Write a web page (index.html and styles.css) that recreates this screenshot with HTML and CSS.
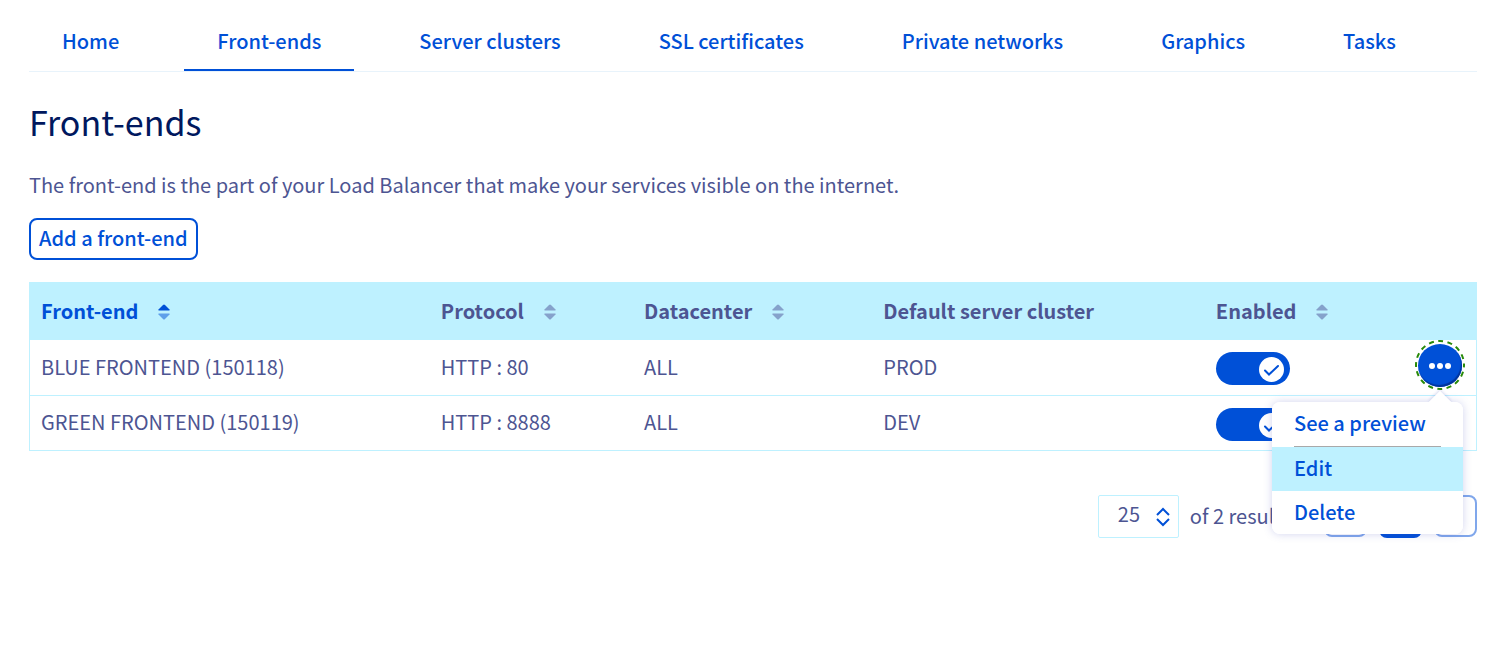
FILE: index.html
```html
<!DOCTYPE html>
<html lang="en">
<head>
<meta charset="utf-8">
<meta name="viewport" content="width=device-width, initial-scale=1">
<title>Front-ends</title>
<link rel="stylesheet" href="styles.css">
</head>
<body>
<svg class="sprite" aria-hidden="true">
  <symbol id="sort-up" viewBox="0 0 12 8"><path d="M.5 6.5V5.5L5 1Q6 0 7 1L11.5 5.5V6.5Z"/></symbol>
  <symbol id="sort-down" viewBox="0 0 12 8"><path d="M.5 1.5V2.5L5 7Q6 8 7 7L11.5 2.5V1.5Z"/></symbol>
  <symbol id="dots" viewBox="0 0 24 8"><circle cx="4" cy="4" r="3"/><circle cx="12" cy="4" r="3"/><circle cx="20" cy="4" r="3"/></symbol>
</svg>
<nav class="tabs">
  <a class="tab" href="#home">Home</a>
  <a class="tab tab-active" href="#frontends" aria-current="page">Front-ends</a>
  <a class="tab" href="#clusters">Server clusters</a>
  <a class="tab" href="#ssl">SSL certificates</a>
  <a class="tab" href="#networks">Private networks</a>
  <a class="tab" href="#graphics">Graphics</a>
  <a class="tab" href="#tasks">Tasks</a>
</nav>
<main>
  <h1 class="title">Front-ends</h1>
  <p class="intro">The front-end is the part of your Load Balancer that make your services visible on the internet.</p>
  <button class="add-button" type="button">Add a front-end</button>
  <table class="grid">
    <colgroup>
      <col class="col-name"><col class="col-protocol"><col class="col-datacenter"><col class="col-cluster"><col class="col-enabled"><col>
    </colgroup>
    <thead>
      <tr>
        <th scope="col"><button class="sort sort-active" type="button">Front-end <span class="arrows"><svg><use href="#sort-up"/></svg><svg><use href="#sort-down"/></svg></span></button></th>
        <th scope="col"><button class="sort" type="button">Protocol <span class="arrows"><svg><use href="#sort-up"/></svg><svg><use href="#sort-down"/></svg></span></button></th>
        <th scope="col"><button class="sort" type="button">Datacenter <span class="arrows"><svg><use href="#sort-up"/></svg><svg><use href="#sort-down"/></svg></span></button></th>
        <th scope="col">Default server cluster</th>
        <th scope="col"><button class="sort" type="button">Enabled <span class="arrows"><svg><use href="#sort-up"/></svg><svg><use href="#sort-down"/></svg></span></button></th>
        <td></td>
      </tr>
    </thead>
    <tbody>
      <tr>
        <td>BLUE FRONTEND (150118)</td>
        <td>HTTP : 80</td>
        <td>ALL</td>
        <td>PROD</td>
        <td>
          <label class="switch"><input type="checkbox" role="switch" aria-label="Enable BLUE FRONTEND" checked><span class="knob"><svg viewBox="0 0 25 25"><path d="M6 13.5 10 17.5 19 9"/></svg></span></label>
        </td>
        <td>
          <div class="actions">
            <button class="more" type="button" aria-label="Actions for BLUE FRONTEND" aria-expanded="true"><svg class="dots"><use href="#dots"/></svg><svg class="ring" viewBox="0 0 50 50"><circle cx="25" cy="25" r="24"/></svg></button>
            <div class="menu">
              <button class="menu-item menu-first" type="button">See a preview</button>
              <button class="menu-item menu-hover" type="button">Edit</button>
              <button class="menu-item menu-last" type="button">Delete</button>
            </div>
          </div>
        </td>
      </tr>
      <tr>
        <td>GREEN FRONTEND (150119)</td>
        <td>HTTP : 8888</td>
        <td>ALL</td>
        <td>DEV</td>
        <td>
          <label class="switch"><input type="checkbox" role="switch" aria-label="Enable GREEN FRONTEND" checked><span class="knob"><svg viewBox="0 0 25 25"><path d="M6 13.5 10 17.5 19 9"/></svg></span></label>
        </td>
        <td>
          <div class="actions">
            <button class="more" type="button" aria-label="Actions for GREEN FRONTEND"><svg class="dots"><use href="#dots"/></svg></button>
          </div>
        </td>
      </tr>
    </tbody>
  </table>
  <div class="pager">
    <label class="page-size">
      <select aria-label="Results per page"><option>25</option><option>50</option></select>
      <svg viewBox="0 0 16 20"><path d="M2 8 8 2 14 8M2 12 8 18 14 12"/></svg>
    </label>
    <span class="count">of 2 results</span>
    <div class="pages">
      <button class="page" type="button" aria-label="Previous page" disabled></button>
      <button class="page page-current" type="button" aria-label="Page 1"></button>
      <button class="page" type="button" aria-label="Next page" disabled></button>
    </div>
  </div>
</main>
</body>
</html>
```
FILE: styles.css
```css
* { box-sizing: border-box; }

body {
  margin: 0;
  padding: 12px 28px 40px 29px;
  background: #fff;
  color: #4d5592;
  font: 20px/28px "Noto Sans CJK SC", "Noto Sans", sans-serif;
}

button, select { font: inherit; color: inherit; cursor: pointer; }
.sprite { position: absolute; width: 0; height: 0; }

.tabs {
  display: flex;
  gap: 32px;
  border-bottom: 1px solid #e8f3fb;
}
.tab {
  padding: 15px 33px 14px;
  border-bottom: 2px solid transparent;
  color: #0050d7;
  font-weight: 500;
  text-decoration: none;
  white-space: nowrap;
}
.tab-active { border-color: #0050d7; }

.title {
  margin: 30px 0 0;
  color: #00185e;
  font-size: 34px;
  line-height: 40px;
  font-weight: 400;
}
.intro { margin: 29px 0 19px; }

.add-button {
  display: block;
  height: 42px;
  padding: 0 8px 2px;
  border: 2px solid #0050d7;
  border-radius: 8px;
  background: #fff;
  color: #0050d7;
  font-weight: 500;
}

.grid {
  width: 100%;
  margin-top: 22px;
  table-layout: fixed;
  border-spacing: 0;
  border: 1px solid #bef1ff;
}
.col-name { width: 27.65%; }
.col-protocol { width: 14.05%; }
.col-datacenter { width: 16.55%; }
.col-cluster { width: 23%; }
.col-enabled { width: 13%; }
.grid th, .grid td {
  height: 55px;
  padding: 0 11px 2px;
  text-align: left;
  white-space: nowrap;
}
.grid th, .grid thead td { height: 57px; background: #bef1ff; font-weight: 700; }
.grid tbody tr + tr td { border-top: 1px solid #bef1ff; }

.sort {
  display: flex;
  align-items: center;
  gap: 20px;
  padding: 0;
  border: 0;
  background: none;
}
.arrows { display: grid; padding-top: 2px; color: #85a2cb; }
.arrows svg { width: 12px; height: 8px; fill: currentColor; }
.sort-active, .sort-active .arrows { color: #0050d7; }
.sort-active svg:last-child { opacity: .5; }

.switch { position: relative; display: block; width: 74px; height: 33px; margin-top: 4px; }
.switch input {
  appearance: none;
  display: block;
  width: 100%;
  height: 100%;
  margin: 0;
  border-radius: 17px;
  background: #0050d7;
}
.knob {
  position: absolute;
  top: 5px;
  right: 6px;
  width: 25px;
  height: 25px;
  border-radius: 50%;
  background: #fff;
}
.knob svg { display: block; fill: none; stroke: #0050d7; stroke-width: 2; stroke-linecap: round; }

.actions { position: relative; display: flex; justify-content: flex-end; padding: 0 3px 2px 0; }
.more {
  position: relative;
  display: grid;
  place-items: center;
  width: 44px;
  height: 43px;
  padding: 0;
  border: 0;
  border-radius: 50%;
  background: #0050d7;
  box-shadow: inset -1px -2px 1px #00349b;
}
.dots { width: 24px; height: 8px; fill: #fff; }
.ring {
  position: absolute;
  inset: -4px -3px -3px;
  width: 50px;
  height: 50px;
  fill: none;
  stroke: #298a09;
  stroke-width: 2;
  stroke-dasharray: 5 4.42;
  stroke-dashoffset: 2.5;
}

.menu {
  position: absolute;
  z-index: 1;
  top: 58px;
  right: 2px;
  width: 191px;
  border-radius: 8px;
  background: #fff;
  box-shadow: 0 0 8px rgba(77, 85, 192, .25);
}
.menu::before {
  content: "";
  position: absolute;
  top: -8px;
  right: 15px;
  width: 16px;
  height: 16px;
  background: #fff;
  box-shadow: -1px -1px 3px rgba(77, 85, 192, .2);
  transform: rotate(45deg);
}
.menu-item {
  position: relative;
  display: block;
  width: 100%;
  height: 44px;
  padding: 0 22px 2px;
  border: 0;
  border-radius: 8px;
  background: #fff;
  color: #0050d7;
  font-weight: 500;
  text-align: left;
}
.menu-first { height: 45px; padding-bottom: 4px; }
.menu-last { height: 43px; }
.menu-first::after {
  content: "";
  position: absolute;
  bottom: 0;
  left: 22px;
  right: 22px;
  height: 1px;
  background: #a9a9a9;
}
.menu-hover { border-radius: 0; background: #bef1ff; }

.pager { display: flex; justify-content: flex-end; align-items: center; margin-top: 44px; }
.page-size { position: relative; display: block; }
.page-size select {
  appearance: none;
  display: block;
  width: 81px;
  height: 43px;
  padding: 0 36px 6px 19px;
  border: 1px solid #bef1ff;
  border-radius: 2px;
  background: #fff;
}
.page-size svg {
  position: absolute;
  top: 12px;
  right: 8px;
  width: 16px;
  height: 20px;
  fill: none;
  stroke: #0050d7;
  stroke-width: 2;
  pointer-events: none;
}
.count { margin: 0 33px 0 11px; padding-bottom: 2px; }
.pages { display: flex; gap: 12px; }
.page {
  width: 43px;
  height: 42px;
  border: 2px solid #80a7eb;
  border-radius: 8px;
  background: #fff;
}
.page-current { height: 43px; border-color: #0050d7; background: #0050d7; }
```
